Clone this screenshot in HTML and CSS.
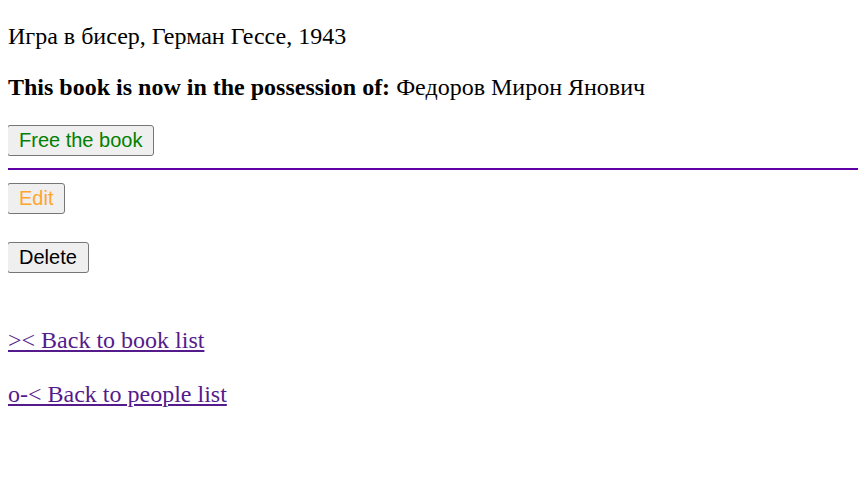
FILE: index.html
```html
<!DOCTYPE html>
<html>
<head>
<meta charset="utf-8">
<link rel="stylesheet" href="styles.css">
</head>
<body class="page">
<p class="line">Игра в бисер, Герман Гессе, 1943</p>
<p class="line"><b>This book is now in the possession of:</b> Федоров Мирон Янович</p>
<div class="act act-free"><button class="btn btn-free">Free the book</button></div>
<hr class="sep">
<div class="act act-edit"><button class="btn btn-edit">Edit</button></div>
<div class="act act-del"><button class="btn">Delete</button></div>
<p class="link-line link-first"><a class="link" href="#">&gt;&lt; Back to book list</a></p>
<p class="link-line"><a class="link" href="#">o-&lt; Back to people list</a></p>
</body>
</html>
```
FILE: styles.css
```css
html, body { background: #fff; }
.page {
  margin: 8px 0 8px 8px;
  font-family: "Liberation Serif", "Times New Roman", serif;
  font-size: 24px;
  color: #000;
}
.line { margin: 0 0 24px 0; line-height: 27px; }
.line:first-child { margin-top: 15px; }
.act { margin: 0 0 0 -1px; line-height: 0; }
.act-free { margin-top: 4px; }
.btn {
  font-family: "Liberation Sans", Arial, sans-serif;
  font-size: 20px;
  padding: 2px 11px;
  margin: 0;
  background: #efefef;
  border: 1px solid #767676;
  border-radius: 3px;
  color: #000;
  height: 31px;
  line-height: 23px;
}
.btn-free { color: green; }
.btn-edit { color: #ffa52e; }
.sep {
  margin: 12px 0 13px -1px;
  border: none;
  border-top: 2px solid #6200a8;
  height: 0;
}
.act-del { margin-top: 28px; }
.link-line { margin: 0; line-height: 27px; }
.link-first { margin-top: 54px; }
.link-line + .link-line { margin-top: 27px; }
.link { color: #551a8b; }
```
